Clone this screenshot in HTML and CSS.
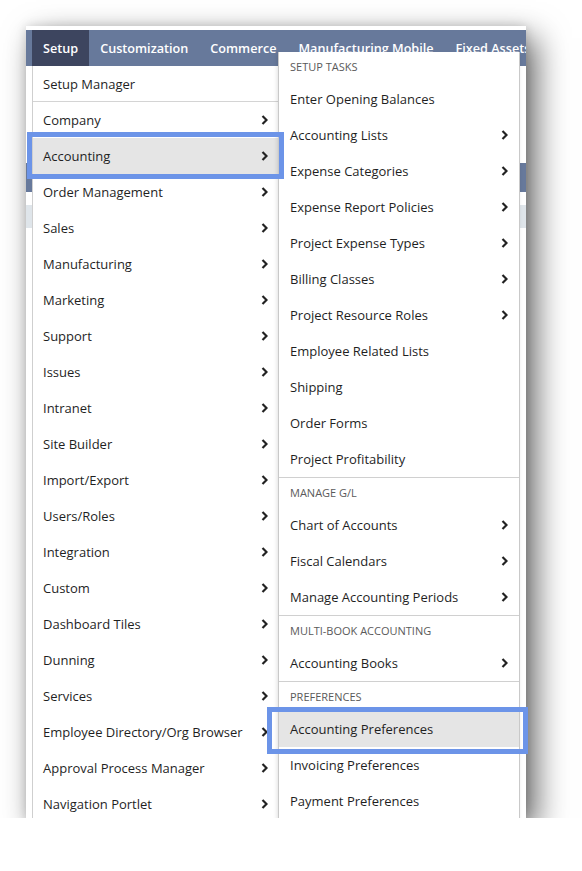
FILE: index.html
```html
<!DOCTYPE html>
<html>
<head>
<meta charset="utf-8">
<link rel="stylesheet" href="styles.css">
</head>
<body>
<div class="frame">
  <div class="shot">
    <div class="topstrip"></div>
    <nav class="navbar">
      <span class="tab active">Setup</span>
      <span class="tab">Customization</span>
      <span class="tab">Commerce</span>
      <span class="tab">Manufacturing Mobile</span>
      <span class="tab">Fixed Assets</span>
    </nav>
    <div class="page">
      <div class="band-slate"></div>
      <div class="band-light"></div>
    </div>

    <ul class="menu main">
      <li class="item first">Setup Manager</li>
      <li class="item sub">Company<svg class="chev" viewBox="0 0 7 10"><polyline points="1.5,1 5.5,5 1.5,9"/></svg></li>
      <li class="item sub hl">Accounting<svg class="chev" viewBox="0 0 7 10"><polyline points="1.5,1 5.5,5 1.5,9"/></svg></li>
      <li class="item sub">Order Management<svg class="chev" viewBox="0 0 7 10"><polyline points="1.5,1 5.5,5 1.5,9"/></svg></li>
      <li class="item sub">Sales<svg class="chev" viewBox="0 0 7 10"><polyline points="1.5,1 5.5,5 1.5,9"/></svg></li>
      <li class="item sub">Manufacturing<svg class="chev" viewBox="0 0 7 10"><polyline points="1.5,1 5.5,5 1.5,9"/></svg></li>
      <li class="item sub">Marketing<svg class="chev" viewBox="0 0 7 10"><polyline points="1.5,1 5.5,5 1.5,9"/></svg></li>
      <li class="item sub">Support<svg class="chev" viewBox="0 0 7 10"><polyline points="1.5,1 5.5,5 1.5,9"/></svg></li>
      <li class="item sub">Issues<svg class="chev" viewBox="0 0 7 10"><polyline points="1.5,1 5.5,5 1.5,9"/></svg></li>
      <li class="item sub">Intranet<svg class="chev" viewBox="0 0 7 10"><polyline points="1.5,1 5.5,5 1.5,9"/></svg></li>
      <li class="item sub">Site Builder<svg class="chev" viewBox="0 0 7 10"><polyline points="1.5,1 5.5,5 1.5,9"/></svg></li>
      <li class="item sub">Import/Export<svg class="chev" viewBox="0 0 7 10"><polyline points="1.5,1 5.5,5 1.5,9"/></svg></li>
      <li class="item sub">Users/Roles<svg class="chev" viewBox="0 0 7 10"><polyline points="1.5,1 5.5,5 1.5,9"/></svg></li>
      <li class="item sub">Integration<svg class="chev" viewBox="0 0 7 10"><polyline points="1.5,1 5.5,5 1.5,9"/></svg></li>
      <li class="item sub">Custom<svg class="chev" viewBox="0 0 7 10"><polyline points="1.5,1 5.5,5 1.5,9"/></svg></li>
      <li class="item sub">Dashboard Tiles<svg class="chev" viewBox="0 0 7 10"><polyline points="1.5,1 5.5,5 1.5,9"/></svg></li>
      <li class="item sub">Dunning<svg class="chev" viewBox="0 0 7 10"><polyline points="1.5,1 5.5,5 1.5,9"/></svg></li>
      <li class="item sub">Services<svg class="chev" viewBox="0 0 7 10"><polyline points="1.5,1 5.5,5 1.5,9"/></svg></li>
      <li class="item sub">Employee Directory/Org Browser<svg class="chev" viewBox="0 0 7 10"><polyline points="1.5,1 5.5,5 1.5,9"/></svg></li>
      <li class="item sub">Approval Process Manager<svg class="chev" viewBox="0 0 7 10"><polyline points="1.5,1 5.5,5 1.5,9"/></svg></li>
      <li class="item sub">Navigation Portlet<svg class="chev" viewBox="0 0 7 10"><polyline points="1.5,1 5.5,5 1.5,9"/></svg></li>
    </ul>

    <div class="menu submenu">
      <div class="group">
        <div class="head">Setup Tasks</div>
        <div class="item">Enter Opening Balances</div>
        <div class="item sub">Accounting Lists<svg class="chev" viewBox="0 0 7 10"><polyline points="1.5,1 5.5,5 1.5,9"/></svg></div>
        <div class="item sub">Expense Categories<svg class="chev" viewBox="0 0 7 10"><polyline points="1.5,1 5.5,5 1.5,9"/></svg></div>
        <div class="item sub">Expense Report Policies<svg class="chev" viewBox="0 0 7 10"><polyline points="1.5,1 5.5,5 1.5,9"/></svg></div>
        <div class="item sub">Project Expense Types<svg class="chev" viewBox="0 0 7 10"><polyline points="1.5,1 5.5,5 1.5,9"/></svg></div>
        <div class="item sub">Billing Classes<svg class="chev" viewBox="0 0 7 10"><polyline points="1.5,1 5.5,5 1.5,9"/></svg></div>
        <div class="item sub">Project Resource Roles<svg class="chev" viewBox="0 0 7 10"><polyline points="1.5,1 5.5,5 1.5,9"/></svg></div>
        <div class="item">Employee Related Lists</div>
        <div class="item">Shipping</div>
        <div class="item">Order Forms</div>
        <div class="item">Project Profitability</div>
      </div>
      <div class="group sep">
        <div class="head">Manage G/L</div>
        <div class="item sub">Chart of Accounts<svg class="chev" viewBox="0 0 7 10"><polyline points="1.5,1 5.5,5 1.5,9"/></svg></div>
        <div class="item sub">Fiscal Calendars<svg class="chev" viewBox="0 0 7 10"><polyline points="1.5,1 5.5,5 1.5,9"/></svg></div>
        <div class="item sub">Manage Accounting Periods<svg class="chev" viewBox="0 0 7 10"><polyline points="1.5,1 5.5,5 1.5,9"/></svg></div>
      </div>
      <div class="group sep">
        <div class="head">Multi-Book Accounting</div>
        <div class="item sub">Accounting Books<svg class="chev" viewBox="0 0 7 10"><polyline points="1.5,1 5.5,5 1.5,9"/></svg></div>
      </div>
      <div class="group sep">
        <div class="head">Preferences</div>
        <div class="item hl">Accounting Preferences</div>
        <div class="item">Invoicing Preferences</div>
        <div class="item">Payment Preferences</div>
      </div>
    </div>
  </div>
  <div class="mark mark-acc"></div>
  <div class="mark mark-pref"></div>
</div>
</body>
</html>
```

FILE: styles.css
```css
html, body {
  margin: 0;
  padding: 0;
  background: #ffffff;
}
body {
  font-family: "Open Sans", "Noto Sans", "DejaVu Sans", sans-serif;
  color: #1f1f1f;
}
.frame {
  position: relative;
  width: 500px;
  margin: 26px 0 0 26px;
}
.shot {
  position: relative;
  width: 500px;
  height: 792px;
  overflow: hidden;
  background: #ffffff;
  box-shadow: 0 0 10px rgba(0,0,0,0.14), 10px 12px 30px rgba(0,0,0,0.6);
}
.topstrip {
  height: 4px;
  background: #ffffff;
}
.navbar {
  display: flex;
  height: 36px;
  padding-left: 6px;
  background: #67799b;
  white-space: nowrap;
}
.tab {
  display: block;
  padding: 1px 11px 0;
  line-height: 35px;
  font-size: 12.65px;
  font-weight: 600;
  color: #ffffff;
}
.tab.active {
  background: #3d455f;
}
.page {
  position: relative;
  padding-top: 97px;
}
.band-slate {
  height: 29px;
  background: #67799b;
}
.band-light {
  height: 23px;
  margin-top: 13px;
  background: #dfe5ea;
}
.menu {
  position: absolute;
  margin: 0;
  padding: 0;
  list-style: none;
  background: #ffffff;
  font-size: 13px;
}
.main {
  left: 6px;
  top: 40px;
  width: 247px;
  border-left: 1px solid #cfcfcf;
}
.submenu {
  left: 252px;
  top: 26px;
  width: 240px;
  border-left: 1px solid #c9c9c9;
  border-right: 1px solid #c9c9c9;
  box-shadow: -1px 2px 4px rgba(0,0,0,0.12);
}
.item {
  display: flex;
  align-items: center;
  justify-content: space-between;
  height: 36px;
  padding: 0 12px 0 10px;
  white-space: nowrap;
}
.main .item.first {
  height: 35px;
  border-bottom: 1px solid #d4d4d4;
}
.submenu .item {
  padding: 0 11px 0 11px;
}
.item.hl {
  background: #e5e5e5;
}
.chev {
  width: 7px;
  height: 10px;
  flex: none;
}
.chev polyline {
  fill: none;
  stroke: #222222;
  stroke-width: 2.2;
}
.group.sep {
  border-top: 1px solid #d0d0d0;
}
.head {
  height: 29px;
  line-height: 29px;
  padding-left: 11px;
  font-size: 11px;
  text-transform: uppercase;
  color: #5a5a5a;
}
.mark {
  position: absolute;
  border: 5px solid #6c94e8;
  box-sizing: border-box;
}
.mark-acc {
  left: 1px;
  top: 106px;
  width: 257px;
  height: 47px;
}
.mark-pref {
  left: 241px;
  top: 681px;
  width: 261px;
  height: 47px;
}
```
